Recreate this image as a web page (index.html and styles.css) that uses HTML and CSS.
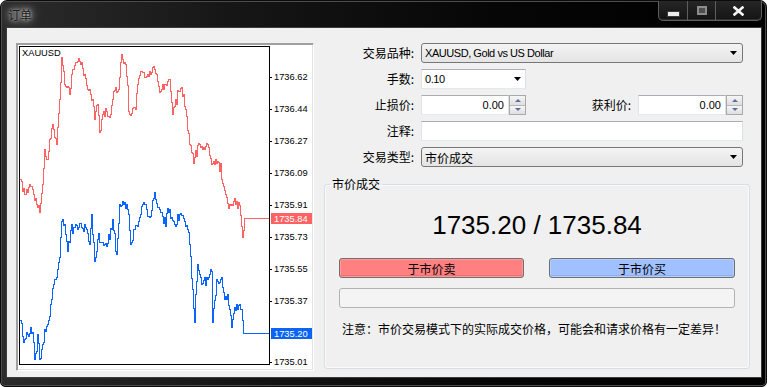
FILE: index.html
```html
<!DOCTYPE html>
<html lang="zh-CN">
<head>
    <meta charset="UTF-8">
    <title>订单</title>
    <link rel="stylesheet" href="styles.css">
</head>
<body>
    <div class="window">
        <div class="titlebar">
            <div class="title">订单</div>
            <div class="caption-buttons">
                <div class="cap-btn cap-min"><span></span></div>
                <div class="cap-btn cap-max"><span></span></div>
                <div class="cap-btn cap-close">
                    <svg width="11" height="10" viewBox="0 0 11 10"><path d="M1.5 1.5 L9.5 8.5 M9.5 1.5 L1.5 8.5" stroke="#f4f4f4" stroke-width="2.6" stroke-linecap="square"/></svg>
                </div>
            </div>
        </div>

        <div class="client">
            <div class="chart-panel">
                <svg class="chart" width="293" height="322" viewBox="0 0 293 322">
                    <defs>
                        <clipPath id="plot-clip"><rect x="1" y="1" width="249" height="317"/></clipPath>
                    </defs>
                    <g clip-path="url(#plot-clip)">
                        <path id="ask-line" fill="none" stroke="#ff6262" stroke-width="1" shape-rendering="crispEdges"/>
                        <path id="bid-line" fill="none" stroke="#0a64ff" stroke-width="1" shape-rendering="crispEdges"/>
                    </g>
                    <rect x="0.5" y="0.5" width="250" height="318" fill="none" stroke="#000" shape-rendering="crispEdges"/>
                    <g id="ticks" stroke="#000" shape-rendering="crispEdges"></g>
                    <g class="axis-labels" id="labels"></g>
                    <rect x="252" y="167" width="41" height="11" fill="#ff6262"/>
                    <text class="marker-text" x="255" y="175.5">1735.84</text>
                    <rect x="252" y="282" width="41" height="11" fill="#0a64f5"/>
                    <text class="marker-text" x="255" y="290.5">1735.20</text>
                    <text class="symbol" x="3" y="10">XAUUSD</text>
                </svg>
            </div>

            <div class="order-side">
                <div class="form">
                    <label>交易品种:</label>
                    <div class="combo">
                        <span class="combo-text">XAUUSD, Gold vs US Dollar</span>
                        <svg class="arrow" width="7" height="4" viewBox="0 0 7 4"><polygon points="0,0 7,0 3.5,4" fill="#000"/></svg>
                    </div>

                    <label>手数:</label>
                    <div class="row-cell">
                        <div class="combo combo-edit">
                            <span class="combo-text">0.10</span>
                            <svg class="arrow" width="7" height="4" viewBox="0 0 7 4"><polygon points="0,0 7,0 3.5,4" fill="#000"/></svg>
                        </div>
                    </div>

                    <label>止损价:</label>
                    <div class="row-cell">
                        <div class="spin">
                            <div class="spin-field">0.00</div>
                            <div class="spin-arrows">
                                <div class="spin-btn"><span class="tri-up"></span></div>
                                <div class="spin-btn"><span class="tri-down"></span></div>
                            </div>
                        </div>
                        <label class="pair-label">获利价:</label>
                        <div class="spin">
                            <div class="spin-field">0.00</div>
                            <div class="spin-arrows">
                                <div class="spin-btn"><span class="tri-up"></span></div>
                                <div class="spin-btn"><span class="tri-down"></span></div>
                            </div>
                        </div>
                    </div>

                    <label>注释:</label>
                    <div class="text-field"></div>

                    <label>交易类型:</label>
                    <div class="combo">
                        <span class="combo-text cjk">市价成交</span>
                        <svg class="arrow" width="7" height="4" viewBox="0 0 7 4"><polygon points="0,0 7,0 3.5,4" fill="#000"/></svg>
                    </div>
                </div>

                <fieldset class="group">
                    <legend>市价成交</legend>
                    <div class="price">1735.20 / 1735.84</div>
                    <div class="buttons">
                        <button class="btn sell">于市价卖</button>
                        <button class="btn buy">于市价买</button>
                    </div>
                    <div class="progress"></div>
                    <div class="note">注意：市价交易模式下的实际成交价格，可能会和请求价格有一定差异！</div>
                </fieldset>
            </div>
        </div>
    </div>

    <script>
        // chart origin sits at page (20, 47)
        const ox = 20, oy = 47;

        const askPoints = [[21,180],[25,195],[30,185],[34,195],[38,208],[40,213],[43,185],[45,150],[48,160],[50,140],[53,125],[57,145],[60,100],[62,58],[65,85],[70,95],[73,70],[76,63],[80,62],[85,75],[88,90],[93,100],[95,120],[98,105],[100,133],[103,115],[107,112],[110,118],[113,100],[116,88],[119,90],[122,55],[126,65],[130,115],[135,108],[138,85],[141,72],[145,78],[150,72],[155,70],[158,82],[161,92],[165,85],[170,80],[173,115],[176,100],[179,92],[182,88],[186,110],[190,145],[195,158],[200,145],[203,150],[208,145],[212,165],[218,162],[222,180],[226,195],[230,205],[234,202],[240,206],[243,238],[245,219]];

        const bidPoints = [[21,321],[24,343],[28,335],[33,333],[35,360],[38,335],[40,360],[43,345],[45,330],[48,325],[52,300],[55,280],[58,270],[60,258],[62,222],[65,225],[68,252],[72,225],[78,230],[85,225],[90,245],[92,215],[95,262],[98,240],[102,243],[105,245],[110,240],[113,220],[117,255],[120,205],[125,203],[128,210],[131,245],[135,230],[140,218],[143,205],[147,210],[150,218],[155,193],[160,210],[165,218],[170,210],[175,225],[180,215],[185,222],[188,230],[190,245],[193,290],[195,323],[198,265],[202,285],[205,278],[210,275],[212,272],[213,323],[217,280],[222,278],[225,300],[228,295],[230,310],[232,328],[235,308],[240,305],[242,310],[244,335]];

        function buildPath(points, seed, endY) {
            let s = seed;
            const rnd = () => { s = (s * 16807) % 2147483647; return s / 2147483647; };
            let d = `M${points[0][0] - ox},${points[0][1] - oy}`;
            for (let i = 1; i < points.length; i++) {
                const [x0, y0] = points[i - 1];
                const [x1, y1] = points[i];
                for (let x = x0 + 1; x < x1; x++) {
                    const t = (x - x0) / (x1 - x0);
                    const spike = rnd() > 0.85 ? (rnd() - 0.5) * 18 : 0;
                    const y = y0 + (y1 - y0) * t + (rnd() - 0.5) * 9 + spike;
                    d += ` H${x - ox + 0.5} V${(y - oy).toFixed(0)}`;
                }
                d += ` H${x1 - ox + 0.5} V${y1 - oy}`;
            }
            d += ` V${endY - oy + 0.5} H${270 - ox}`;
            return d;
        }

        document.getElementById('ask-line').setAttribute('d', buildPath(askPoints, 1234, 219));
        document.getElementById('bid-line').setAttribute('d', buildPath(bidPoints, 9876, 334));

        const axis = [
            ['1736.62', 77.5], ['1736.44', 109.8], ['1736.27', 141.8], ['1736.09', 174],
            ['1735.91', 205.5], ['1735.73', 237.5], ['1735.55', 270], ['1735.37', 302], ['1735.01', 363]
        ];
        const ticks = document.getElementById('ticks');
        const labels = document.getElementById('labels');
        axis.forEach(([text, y]) => {
            const yy = Math.round(y - oy) + 0.5;
            ticks.innerHTML += `<line x1="250" y1="${yy}" x2="253" y2="${yy}"/>`;
            labels.innerHTML += `<text x="255" y="${(y - oy + 3.4).toFixed(1)}">${text}</text>`;
        });
    </script>
</body>
</html>
```

FILE: styles.css
```css
body {
    margin: 0;
    background: #fff;
    font-family: "Noto Sans CJK SC", sans-serif;
    font-size: 12px;
    color: #000;
}

.window {
    width: 767px;
    height: 387px;
    box-sizing: border-box;
    display: flex;
    flex-direction: column;
    background: linear-gradient(to right, #2c2c2c 0%, #161616 30%, #060606 65%, #000 100%);
    border: 1px solid #0b0b0b;
    border-radius: 7px 7px 5px 5px;
    box-shadow: inset 0 0 0 1px #4c4c4c;
}

.titlebar {
    height: 27px;
    display: flex;
    justify-content: space-between;
    align-items: flex-start;
}

.title {
    align-self: center;
    margin-left: 7px;
    line-height: 14px;
    font-size: 12px;
    color: #1c1c1c;
    text-shadow: 0 0 3px #c4c4c4, 0 0 6px #b0b0b0, 0 0 10px #9a9a9a, 0 0 14px #7a7a7a;
}

.caption-buttons {
    display: flex;
    height: 19px;
    margin-right: 4px;
    border: 1px solid #5e5e5e;
    border-top: none;
    border-radius: 0 0 5px 5px;
    background: linear-gradient(#262626, #141414);
    box-shadow: inset 0 -1px 0 #2e2e2e;
}

.cap-btn {
    display: flex;
    align-items: center;
    justify-content: center;
}

.cap-min {
    width: 28px;
}

.cap-max {
    width: 27px;
    border-left: 1px solid #5e5e5e;
}

.cap-close {
    width: 45px;
    border-left: 1px solid #5e5e5e;
}

.cap-min span {
    display: block;
    width: 11px;
    height: 4px;
    margin-top: 6px;
    background: #ececec;
    box-shadow: 0 0 0 1px #3a3a3a;
}

.cap-max span {
    display: block;
    width: 10px;
    height: 9px;
    box-sizing: border-box;
    border: 2px solid #8c8c8c;
    background: #4e4e4e;
}

.client {
    flex: 1;
    margin: 0 5px 9px 6px;
    padding: 15px 0 0 9px;
    background: #f0f0f0;
    display: flex;
    align-items: flex-start;
    box-shadow: 0 0 0 1px #3c3c3c;
}

.chart-panel {
    width: 298px;
    height: 328px;
    box-sizing: border-box;
    margin-right: 10px;
    padding: 2px 0 0 2px;
    background: #fff;
    border: 1px solid;
    border-color: #a0a0a0 #fff #fff #a0a0a0;
    box-shadow: inset 1px 1px 0 #a0a0a0, inset -1px -1px 0 #e3e3e3;
}

.chart {
    display: block;
}

.axis-labels text,
.marker-text,
.symbol {
    font-family: "Liberation Sans", sans-serif;
    font-size: 9.3px;
}

.marker-text {
    fill: #fff;
}

.order-side {
    width: 426px;
}

.form {
    display: grid;
    grid-template-columns: 92px 322px;
    column-gap: 5px;
    row-gap: 6px;
}

.form label {
    text-align: right;
    padding-right: 2px;
    line-height: 20px;
    font-size: 12px;
}

.row-cell {
    display: flex;
    align-items: center;
}

.form .pair-label {
    flex: 1;
    padding-right: 7px;
}

.combo {
    height: 20px;
    box-sizing: border-box;
    display: flex;
    align-items: center;
    padding: 0 5px 0 3px;
    border: 1px solid #777;
    border-radius: 3px;
    background: linear-gradient(#f4f4f4, #e4e4e4);
}

.combo-text {
    flex: 1;
    font-family: "Liberation Sans", sans-serif;
    font-size: 11px;
    letter-spacing: -0.45px;
}

.combo-text.cjk {
    font-family: "Noto Sans CJK SC", sans-serif;
    font-size: 12px;
    letter-spacing: 0;
}

.combo-edit {
    width: 105px;
    border-radius: 0;
    border-color: #abadb3 #dbdfe6 #e3e9ef #e2e3ea;
    background: #fff;
    padding-right: 4px;
}

.spin {
    width: 105px;
    height: 20px;
    display: flex;
}

.spin-field {
    flex: 1;
    box-sizing: border-box;
    border: 1px solid;
    border-color: #abadb3 #dbdfe6 #e3e9ef #e2e3ea;
    background: #fff;
    text-align: right;
    padding-right: 4px;
    line-height: 18px;
    font-family: "Liberation Sans", sans-serif;
    font-size: 11px;
}

.spin-arrows {
    width: 17px;
    box-sizing: border-box;
    border: 1px solid #a9a9a9;
    display: flex;
    flex-direction: column;
}

.spin-btn {
    flex: 1;
    display: flex;
    align-items: center;
    justify-content: center;
    background: linear-gradient(#f6f6f6, #dedede);
}

.spin-btn + .spin-btn {
    border-top: 1px solid #b8b8b8;
}

.tri-up {
    border-left: 3px solid transparent;
    border-right: 3px solid transparent;
    border-bottom: 3px solid #5b6f9c;
}

.tri-down {
    border-left: 3px solid transparent;
    border-right: 3px solid transparent;
    border-top: 3px solid #5b6f9c;
}

.text-field {
    height: 20px;
    box-sizing: border-box;
    border: 1px solid;
    border-color: #abadb3 #dbdfe6 #e3e9ef #e2e3ea;
    background: #fff;
}

.group {
    width: 100%;
    box-sizing: border-box;
    margin: 9px 0 0;
    padding: 18px 14px 31px;
    border: 1px solid #d5dfe5;
    border-radius: 3px;
    box-shadow: inset 0 0 0 1px #fafafa;
    min-width: 0;
}

.group legend {
    margin-left: -9px;
    padding: 0 2px;
    font-size: 12px;
    line-height: 16px;
}

.price {
    text-align: center;
    font-family: "Liberation Sans", sans-serif;
    font-size: 26px;
    line-height: 30px;
}

.buttons {
    display: flex;
    justify-content: space-between;
    margin-top: 18px;
}

.btn {
    height: 20px;
    padding: 0;
    border: 1px solid #707070;
    border-radius: 3px;
    font-family: "Noto Sans CJK SC", sans-serif;
    font-size: 12px;
    color: #000;
}

.sell {
    width: 185px;
    background: #ff8080;
    box-shadow: inset 0 0 0 1px #ff9898, inset 0 -2px 0 #ec7070;
}

.buy {
    width: 186px;
    background: #a0c0ff;
    box-shadow: inset 0 0 0 1px #b4cdff, inset 0 -2px 0 #8eaef0;
}

.progress {
    height: 20px;
    box-sizing: border-box;
    margin-top: 10px;
    border: 1px solid #b2b2b2;
    border-radius: 3px;
    background: #f4f4f4;
}

.note {
    margin-top: 13px;
    padding-left: 3px;
    font-size: 12px;
    line-height: 16px;
}
```
